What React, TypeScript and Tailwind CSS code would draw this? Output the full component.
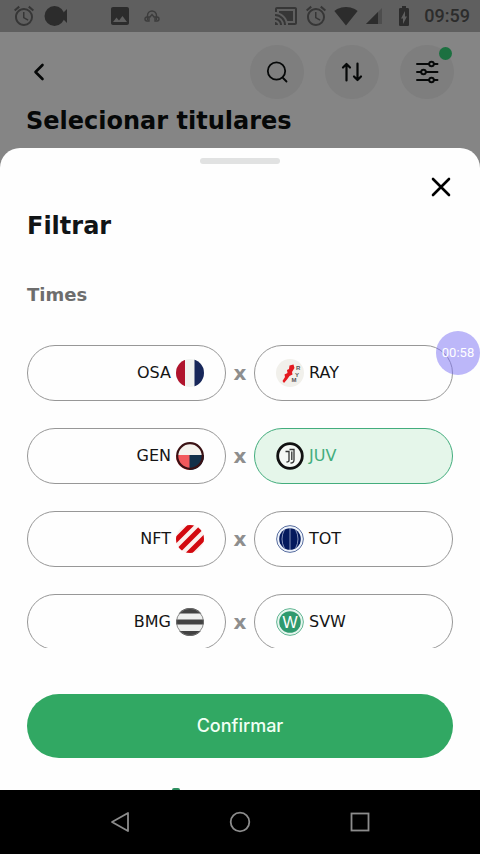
import { useState, type ReactNode } from 'react'
import { MdAccessAlarm, MdBatteryChargingFull, MdCastConnected, MdImage, MdSignalWifi4Bar } from 'react-icons/md'
import clsx from 'clsx'

interface Team {
  code: string
  crest: ReactNode
}

const CRESTS = {
  OSA: (
    <g clipPath="url(#crest)">
      <rect width="28" height="28" fill="#f1f3f1" />
      <rect width="9" height="28" fill="#b0142d" />
      <rect x="18.500" width="9.500" height="28" fill="#17275a" />
    </g>
  ),
  RAY: (
    <g>
      <circle cx="14" cy="14" r="14" fill="#f1f0eb" />
      <path d="m13.500 6.500 4-1 1 3.500-2.500 4 .5 2.500-3 1.500-2.500 3.500-3 3.500L6.500 22l2.500-4-.5-2.500 3-1.500-.5-3 2-1z" fill="#e4191f" />
      <g fill="#555" fontFamily="Liberation Sans" fontWeight="bold" fontSize="6">
        <text x="20" y="11">R</text>
        <text x="19" y="17.500">Y</text>
        <text x="15.500" y="23">M</text>
      </g>
    </g>
  ),
  GEN: (
    <g>
      <g clipPath="url(#crest)">
        <rect width="28" height="14" fill="#f4f1ec" />
        <rect y="13" width="14" height="15" fill="#f2585b" />
        <rect x="13.500" y="13" width="15" height="15" fill="#122f49" />
      </g>
      <circle cx="14" cy="14" r="12.800" fill="none" stroke="#3a1114" strokeWidth="2.200" />
    </g>
  ),
  JUV: (
    <g>
      <circle cx="14" cy="14" r="12.300" fill="#f5f8f5" stroke="#111" strokeWidth="2.800" />
      <path d="M9.500 9.500h3.500v9q0 1.500-2.500 1.500M13.500 7.500h4.500v10.500q0 3-3.500 3M15.800 9.500v8.500" fill="none" stroke="#333" strokeWidth="1.300" />
    </g>
  ),
  NFT: (
    <g clipPath="url(#crest)">
      <rect width="28" height="28" fill="#fbf0ee" />
      <path d="M-2 17 17-2M3 25 25 3M11 30 30 11" stroke="#d3080f" strokeWidth="5" />
    </g>
  ),
  TOT: (
    <g>
      <circle cx="14" cy="14" r="13.400" fill="#edf2fa" stroke="#5a6fa0" />
      <circle cx="14" cy="14" r="10.800" fill="#04195d" />
      <path d="M14 3v22M8.500 4.500q-5 9.500 0 19M19.500 4.500q5 9.500 0 19" fill="none" stroke="#a9b4d3" strokeWidth=".8" />
    </g>
  ),
  BMG: (
    <g>
      <g clipPath="url(#crest)">
        <rect width="28" height="28" fill="#eeefee" />
        <rect width="28" height="5.500" fill="#424242" />
        <rect y="11.500" width="28" height="5" fill="#424242" />
        <rect y="23" width="28" height="5" fill="#424242" />
      </g>
      <circle cx="14" cy="14" r="13.500" fill="none" stroke="#777" strokeWidth=".8" />
    </g>
  ),
  SVW: (
    <g>
      <circle cx="14" cy="14" r="13.400" fill="#e6f5ee" stroke="#65b795" />
      <circle cx="14" cy="14" r="10.800" fill="#2f9a6e" />
      <text x="14" y="19.500" textAnchor="middle" fill="#fff" fontFamily="Liberation Sans" fontSize="16">W</text>
    </g>
  ),
}

const MATCHES: { home: Team; away: Team }[] = [
  { home: { code: 'OSA', crest: CRESTS.OSA }, away: { code: 'RAY', crest: CRESTS.RAY } },
  { home: { code: 'GEN', crest: CRESTS.GEN }, away: { code: 'JUV', crest: CRESTS.JUV } },
  { home: { code: 'NFT', crest: CRESTS.NFT }, away: { code: 'TOT', crest: CRESTS.TOT } },
  { home: { code: 'BMG', crest: CRESTS.BMG }, away: { code: 'SVW', crest: CRESTS.SVW } },
]

function StatusBar() {
  return (
    <div className="flex h-8 shrink-0 items-center justify-between bg-[#5f5f5f] pl-3 pr-2.5 text-[#2c2c2c]">
      <div className="flex items-center">
        <MdAccessAlarm className="size-6 text-[#363636]" />
        <svg viewBox="0 0 24 20" className="ml-2 h-5 w-6" fill="currentColor">
          <circle cx="10.500" cy="10" r="10" />
          <path d="M16 7h3l4-4v14l-4-4h-3z" />
        </svg>
        <MdImage className="ml-10 size-6" />
        <svg viewBox="0 0 16 16" className="ml-3 size-4 text-[#3c3c3c]" fill="none" stroke="currentColor" strokeWidth="1.400">
          <path d="M3.500 12V7.500a4.500 4.500 0 0 1 9 0V12" />
          <path d="M5 9H3a2 2 0 0 0 0 4h2zM11 9h2a2 2 0 0 1 0 4h-2z" />
          <path d="m5.500 9.500 2.500-3 2.500 3" />
        </svg>
      </div>
      <div className="flex items-center">
        <MdCastConnected className="size-6 text-[#363636]" />
        <MdAccessAlarm className="ml-1.5 size-6 text-[#363636]" />
        <MdSignalWifi4Bar className="ml-1.5 size-6" />
        <svg viewBox="0 0 16 16" className="ml-2 size-4">
          <path d="M16 0v16H0z" fill="#4d4d4d" />
          <path d="M12 4v12H0z" fill="#2c2c2c" />
        </svg>
        <MdBatteryChargingFull className="ml-2.5 size-6" />
        <span className="ml-2 font-[Roboto] text-lg font-medium leading-6">09:59</span>
      </div>
    </div>
  )
}

function RoundButton({ label, children }: { label: string; children: ReactNode }) {
  return (
    <button aria-label={label} className="relative flex size-[54px] items-center justify-center rounded-full bg-[#7e7e7e]">
      {children}
    </button>
  )
}

function Header() {
  return (
    <header className="shrink-0 px-[26px] pt-[13px] text-[#060808]">
      <div className="flex items-center justify-between">
        <button aria-label="Voltar" className="flex size-6 items-center justify-center">
          <svg viewBox="0 0 24 24" className="size-6" fill="none" stroke="currentColor" strokeWidth="2.600" strokeLinecap="round" strokeLinejoin="round">
            <path d="m16.500 5-7 7 7 7" />
          </svg>
        </button>
        <div className="flex gap-[21px]">
          <RoundButton label="Buscar">
            <svg viewBox="0 0 24 24" className="size-6" fill="none" stroke="currentColor" strokeWidth="1.800" strokeLinecap="round">
              <circle cx="11.500" cy="11" r="8.700" />
              <path d="m18 18 3.500 3.500" />
            </svg>
          </RoundButton>
          <RoundButton label="Ordenar">
            <svg viewBox="0 0 24 24" className="size-6" fill="none" stroke="currentColor" strokeWidth="2.200" strokeLinecap="round" strokeLinejoin="round">
              <path d="M6.500 20.500V4.500M3 7.500l3.500-3.500L10 7.500M17.500 3.500v16M14 16.500l3.500 3.500 3.500-3.500" />
            </svg>
          </RoundButton>
          <RoundButton label="Filtros">
            <svg viewBox="0 0 24 24" className="size-6" fill="none" stroke="currentColor" strokeWidth="1.900" strokeLinecap="round">
              <path d="M2 4h12M19 4h3.500M2 12h4M11 12h11.500M2 20h12M19 20h3.500" />
              <circle cx="16.500" cy="4" r="2.300" />
              <circle cx="8.500" cy="12" r="2.300" />
              <circle cx="16.500" cy="20" r="2.300" />
            </svg>
            <span className="absolute right-0.5 top-0.5 size-[13px] rounded-full bg-[#1c7040]" />
          </RoundButton>
        </div>
      </div>
      <h1 className="mt-2 pb-[13px] font-['DejaVu_Sans'] text-2xl font-bold leading-7">Selecionar titulares</h1>
    </header>
  )
}

interface TeamButtonProps {
  team: Team
  side: 'home' | 'away'
  selected: boolean
  onToggle: () => void
}

function TeamButton({ team, side, selected, onToggle }: TeamButtonProps) {
  return (
    <button
      aria-pressed={selected}
      onClick={onToggle}
      className={clsx(
        "flex h-14 min-w-0 flex-1 items-center justify-end gap-[5px] rounded-full border px-[21px] font-['DejaVu_Sans'] text-base leading-5",
        side === 'away' && 'flex-row-reverse',
        selected ? 'border-[#43ad7d] bg-[#e5f6ea] text-[#43ad7d]' : 'border-[#979797] text-[#151515]'
      )}
    >
      <span>{team.code}</span>
      <svg viewBox="0 0 28 28" className="size-7" aria-hidden="true">
        {team.crest}
      </svg>
    </button>
  )
}

function NavigationBar() {
  return (
    <nav className="flex h-16 shrink-0 items-center justify-center gap-24 bg-black text-[#8c8c8c]">
      <button aria-label="Voltar">
        <svg viewBox="0 0 24 24" className="size-6" fill="none" stroke="currentColor" strokeWidth="1.800" strokeLinejoin="round">
          <path d="M20 3v18L4 12z" />
        </svg>
      </button>
      <button aria-label="Início">
        <svg viewBox="0 0 24 24" className="size-6" fill="none" stroke="currentColor" strokeWidth="1.800">
          <circle cx="12" cy="12" r="9.300" />
        </svg>
      </button>
      <button aria-label="Recentes">
        <svg viewBox="0 0 24 24" className="size-6" fill="none" stroke="currentColor" strokeWidth="1.800">
          <rect x="3.500" y="3.500" width="17" height="17" />
        </svg>
      </button>
    </nav>
  )
}

export default function App() {
  const [selected, setSelected] = useState<string[]>(['JUV'])

  const toggle = (code: string) =>
    setSelected((prev) => (prev.includes(code) ? prev.filter((c) => c !== code) : [...prev, code]))

  return (
    <div className="relative flex h-screen flex-col bg-[#858585]">
      <svg className="absolute size-0" aria-hidden="true">
        <clipPath id="crest">
          <circle cx="14" cy="14" r="14" />
        </clipPath>
      </svg>

      <StatusBar />
      <Header />

      {/* Filter sheet */}
      <section role="dialog" aria-label="Filtrar" className="relative flex min-h-0 flex-1 flex-col rounded-t-[20px] bg-[#fefefe] px-[27px] pb-8 pt-2.5">
        <div className="h-1.5 w-20 shrink-0 self-center rounded-full bg-[#e1e2e2]" />
        <button aria-label="Fechar" className="mt-[11px] self-end text-black">
          <svg viewBox="0 0 24 24" className="size-6" fill="none" stroke="currentColor" strokeWidth="2.600" strokeLinecap="round">
            <path d="m4 4 16 16M20 4 4 20" />
          </svg>
        </button>
        <h2 className="mt-[13px] font-['DejaVu_Sans'] text-2xl font-bold leading-7 text-[#111416]">Filtrar</h2>
        <h3 className="mt-[43px] font-['DejaVu_Sans'] text-lg font-bold leading-6 text-[#6d6d6d]">Times</h3>

        <div className="mt-[38px] flex min-h-0 flex-1 flex-col gap-[27px] overflow-y-auto [scrollbar-width:none]">
          {MATCHES.map(({ home, away }) => (
            <div key={home.code} className="flex shrink-0 items-center">
              <TeamButton team={home} side="home" selected={selected.includes(home.code)} onToggle={() => toggle(home.code)} />
              <span className="w-7 text-center font-['DejaVu_Sans'] text-xl font-bold leading-6 text-[#8e8e8e]">x</span>
              <TeamButton team={away} side="away" selected={selected.includes(away.code)} onToggle={() => toggle(away.code)} />
            </div>
          ))}
        </div>

        <button className="mt-[46px] h-16 shrink-0 rounded-full bg-[#31a863] font-[Inter] text-lg font-medium text-[#f0fff4]">
          Confirmar
        </button>
        <span className="absolute bottom-0 left-[172px] h-0.5 w-2 rounded-t-full bg-[#2f8f60]" />
      </section>

      <NavigationBar />

      {/* Floating recorder timer */}
      <div className="absolute right-0 top-[331px] flex size-11 items-center justify-center rounded-full bg-[#7a70f4]/50 font-[Roboto] text-[13px] text-white">
        00:58
      </div>
    </div>
  )
}
